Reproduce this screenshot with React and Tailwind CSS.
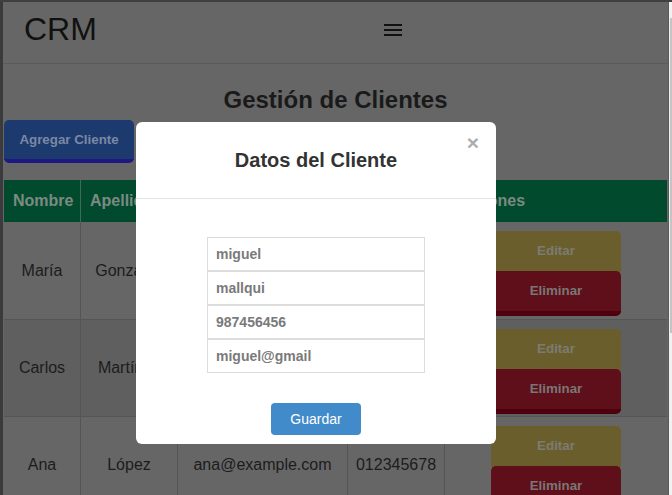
const clients = [
  { nombre: 'María', apellido: 'González', email: 'maria@example.com', telefono: '987654321', h: 'h-[98px]' },
  { nombre: 'Carlos', apellido: 'Martínez', email: 'carlos@example.com', telefono: '123456789', h: 'h-[97px]' },
  { nombre: 'Ana', apellido: 'López', email: 'ana@example.com', telefono: '012345678', h: 'h-[97px]' },
];

const cols = 'grid grid-cols-[77px_97px_170px_97px_222px]';

const App = () => {
  return (
    <div className="relative h-[495px] w-[672px] overflow-hidden bg-[#3f3f3f] font-['Liberation_Sans',Arial,sans-serif]">
      <div className="flex h-full pt-[2px]">
        <div className="w-[3px] shrink-0 bg-[#3b3b3e]" />

        {/* dimmed page under the modal */}
        <div className="flex-1 overflow-hidden bg-[#666666]">
          <header className="flex h-[62px] items-center border-b border-[#5b5b5b]">
            <span className="mb-[7px] pl-[21px] text-[32px] leading-none text-[#111111]">CRM</span>
            <svg className="mb-[4px] ml-[287px]" width="18" height="14" viewBox="0 0 18 14">
              <rect x="0" y="0" width="18" height="2" fill="#111" />
              <rect x="0" y="5" width="18" height="2" fill="#111" />
              <rect x="0" y="10" width="18" height="2" fill="#111" />
            </svg>
          </header>

          <div className="px-[1px]">
            <h2 className="pt-[22px] text-center text-[24px] font-bold leading-[28px] text-[#1a1a1a]">
              Gestión de Clientes
            </h2>

            <button className="mt-[6px] h-[43px] w-[130px] rounded-[5px] border-b-4 border-[#1f1882] bg-[#1c3a6e] text-[13.33px] font-bold text-[#7b88a3]">
              Agregar Cliente
            </button>

            <div className="mt-[17px]">
              <div className={`${cols} h-[42px] bg-[#024a2d] text-[16px] font-bold text-[#7b8a83]`}>
                {['Nombre', 'Apellido', 'Email', 'Teléfono', 'Acciones'].map((h) => (
                  <div key={h} className="flex items-center border-r border-[#3f6b57] pl-[9px] last:border-r-0">
                    {h}
                  </div>
                ))}
              </div>

              {clients.map((c, i) => (
                <div
                  key={c.nombre}
                  className={`${cols} ${c.h} border-b border-[#555555] text-[16px] text-[#1c1c1c] ${
                    i % 2 === 1 ? 'bg-[#5f5f5f]' : 'bg-[#666666]'
                  }`}
                >
                  <div className="flex items-center justify-center border-r border-[#555555]">{c.nombre}</div>
                  <div className="flex items-center justify-center border-r border-[#555555]">{c.apellido}</div>
                  <div className="flex items-center justify-center border-r border-[#555555]">{c.email}</div>
                  <div className="flex items-center justify-center border-r border-[#555555]">{c.telefono}</div>
                  <div className="flex flex-col items-center pt-[9px]">
                    <button className="h-[44px] w-[130px] rounded-[5px] bg-[#6b5e2d] pb-[4px] text-[13.33px] font-bold text-[#7c7b73]">
                      Editar
                    </button>
                    <button className="-mt-[4px] h-[45px] w-[130px] rounded-[5px] border-b-[5px] border-[#4e000f] bg-[#5f0f19] text-[13.33px] font-bold text-[#7a7677]">
                      Eliminar
                    </button>
                  </div>
                </div>
              ))}
            </div>
          </div>
        </div>

        {/* browser scrollbar */}
        <div className="w-[4px] shrink-0 border-l border-[#5a5a5a] bg-[#f1f1f1] pt-[16px]">
          <div className="ml-[1px] h-[315px] w-[2px] bg-[#c4c4c4]" />
        </div>
      </div>

      {/* modal */}
      <div className="absolute left-[136px] top-[122px] flex h-[322px] w-[360px] flex-col rounded-[6px] bg-white">
        <div className="relative flex h-[77px] items-center justify-center border-b border-[#e5e5e5]">
          <h4 className="text-[20px] font-bold text-[#333333]">Datos del Cliente</h4>
          <span className="absolute right-[17px] top-[10px] text-[21px] font-bold leading-none text-[#adadad]">×</span>
        </div>
        <div className="flex flex-col items-center pt-[38px]">
          {['miguel', 'mallqui', '987456456', 'miguel@gmail'].map((v) => (
            <div
              key={v}
              className="flex h-[34px] w-[218px] items-center border border-[#dcdcdc] pl-[8px] text-[14px] font-bold text-[#7a7a7a]"
            >
              {v}
            </div>
          ))}
          <button className="mt-[30px] h-[32px] w-[90px] rounded-[4px] bg-[#428bca] text-[14px] text-white">
            Guardar
          </button>
        </div>
      </div>
    </div>
  );
};

export default App;
